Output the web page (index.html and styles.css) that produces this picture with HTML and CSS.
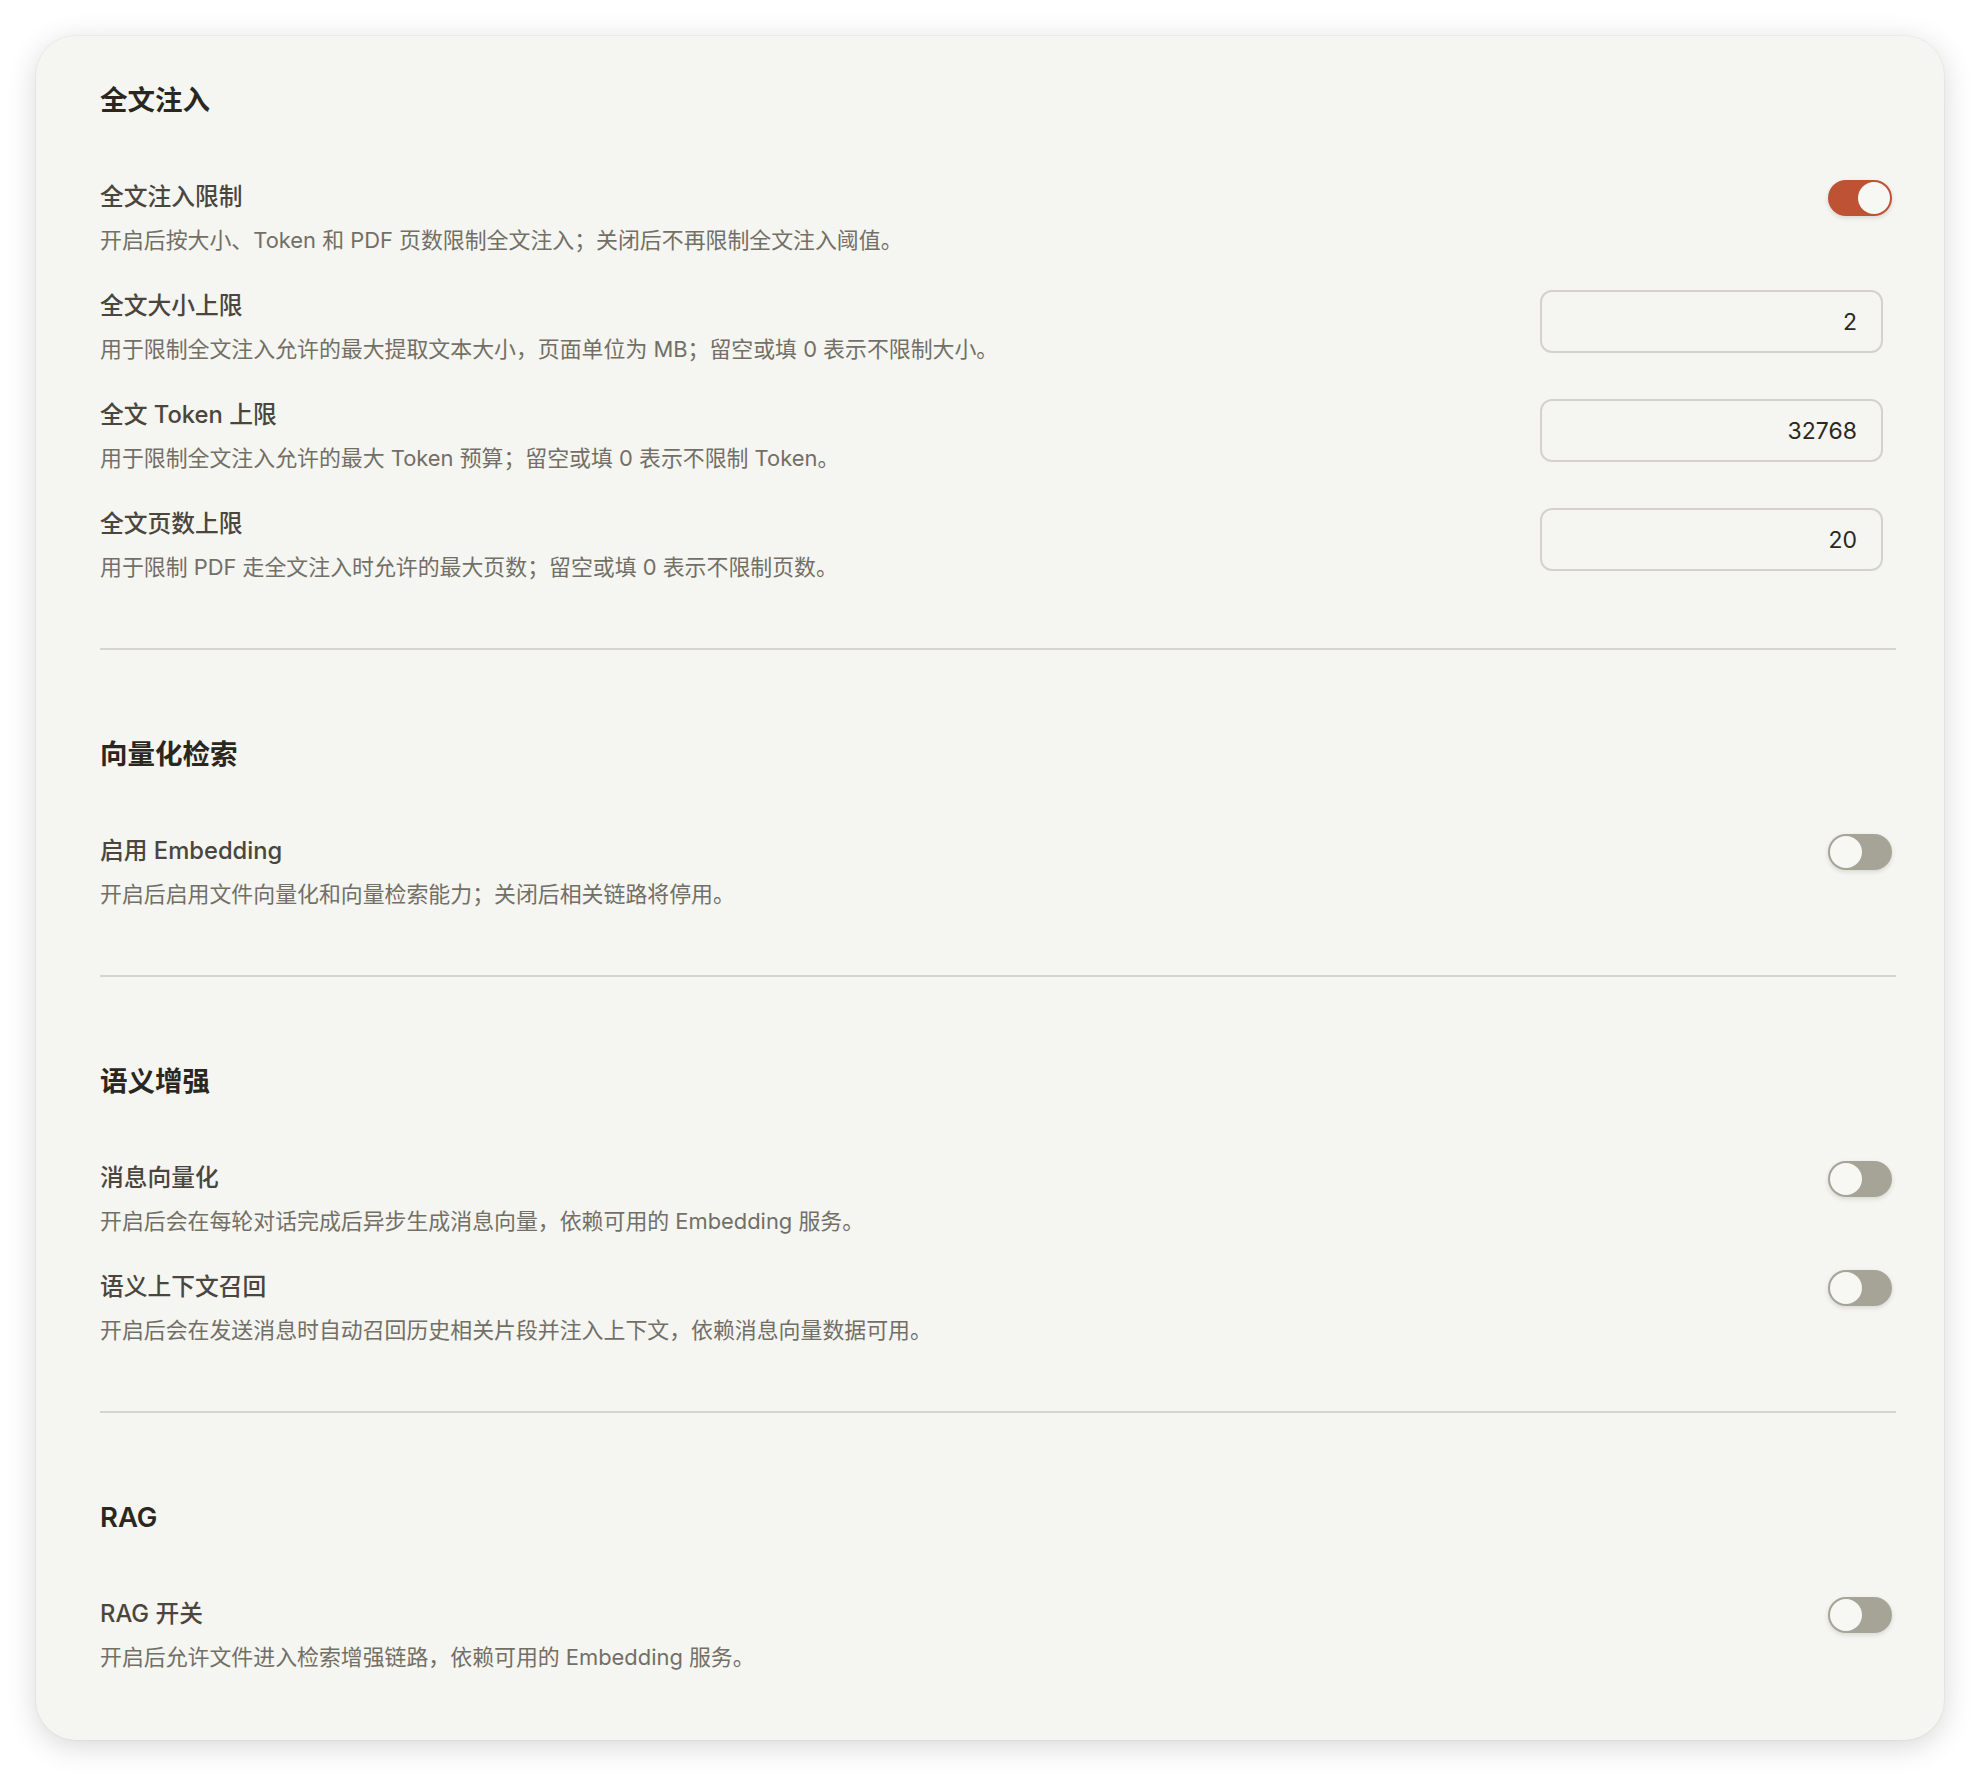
FILE: index.html
```html
<!DOCTYPE html>
<html lang="zh-CN">
<head>
  <meta charset="UTF-8">
  <title>检索设置</title>
  <link rel="stylesheet" href="styles.css">
</head>
<body>

  <div class="card">

    <section class="section">
      <h2>全文注入</h2>

      <div class="row">
        <div class="text">
          <div class="label">全文注入限制</div>
          <div class="desc">开启后按大小、Token 和 PDF 页数限制全文注入；关闭后不再限制全文注入阈值。</div>
        </div>
        <button class="switch on" aria-pressed="true"><span class="knob"></span></button>
      </div>

      <div class="row">
        <div class="text">
          <div class="label">全文大小上限</div>
          <div class="desc">用于限制全文注入允许的最大提取文本大小，页面单位为 MB；留空或填 0 表示不限制大小。</div>
        </div>
        <input class="num" type="text" value="2">
      </div>

      <div class="row">
        <div class="text">
          <div class="label">全文 Token 上限</div>
          <div class="desc">用于限制全文注入允许的最大 Token 预算；留空或填 0 表示不限制 Token。</div>
        </div>
        <input class="num" type="text" value="32768">
      </div>

      <div class="row">
        <div class="text">
          <div class="label">全文页数上限</div>
          <div class="desc">用于限制 PDF 走全文注入时允许的最大页数；留空或填 0 表示不限制页数。</div>
        </div>
        <input class="num" type="text" value="20">
      </div>
    </section>

    <section class="section">
      <h2>向量化检索</h2>

      <div class="row">
        <div class="text">
          <div class="label">启用 Embedding</div>
          <div class="desc">开启后启用文件向量化和向量检索能力；关闭后相关链路将停用。</div>
        </div>
        <button class="switch" aria-pressed="false"><span class="knob"></span></button>
      </div>
    </section>

    <section class="section">
      <h2>语义增强</h2>

      <div class="row">
        <div class="text">
          <div class="label">消息向量化</div>
          <div class="desc">开启后会在每轮对话完成后异步生成消息向量，依赖可用的 Embedding 服务。</div>
        </div>
        <button class="switch" aria-pressed="false"><span class="knob"></span></button>
      </div>

      <div class="row">
        <div class="text">
          <div class="label">语义上下文召回</div>
          <div class="desc">开启后会在发送消息时自动召回历史相关片段并注入上下文，依赖消息向量数据可用。</div>
        </div>
        <button class="switch" aria-pressed="false"><span class="knob"></span></button>
      </div>
    </section>

    <section class="section">
      <h2>RAG</h2>

      <div class="row">
        <div class="text">
          <div class="label">RAG 开关</div>
          <div class="desc">开启后允许文件进入检索增强链路，依赖可用的 Embedding 服务。</div>
        </div>
        <button class="switch" aria-pressed="false"><span class="knob"></span></button>
      </div>
    </section>

  </div>

</body>
</html>
```

FILE: styles.css
```css
body {
  margin: 0;
  padding: 36px;
  background: #fff;
  font-family: Inter, "Noto Sans CJK SC", sans-serif;
}

.card {
  background-color: #f5f5f1;
  border-radius: 40px;
  padding: 0 48px 0 64px;
  height: 1704px;
  box-sizing: border-box;
  box-shadow: 0 6px 30px rgba(0, 0, 0, 0.16), 0 0 0 1px rgba(0, 0, 0, 0.03);
}

.section {
  padding: 84px 0 65px;
  border-top: 2px solid #d6d4cc;
}

.section:first-child {
  padding-top: 44px;
  border-top: none;
}

.section:last-child {
  padding-bottom: 0;
}

h2 {
  margin: 0 0 60px;
  font-size: 27.5px;
  line-height: 40px;
  font-weight: 600;
  color: #2a2720;
}

.row {
  display: flex;
  align-items: flex-start;
  justify-content: space-between;
}

.row + .row {
  margin-top: 33px;
}

.label {
  font-size: 23.75px;
  line-height: 34px;
  font-weight: 500;
  color: #4a463e;
}

.desc {
  margin-top: 10px;
  font-size: 21.9px;
  line-height: 32px;
  color: #726f66;
}

/* toggle switch */
.switch {
  margin: 0 4px 0 0;
  padding: 2px;
  width: 64px;
  height: 36px;
  border: none;
  border-radius: 18px;
  background-color: #a6a497;
  box-shadow: 0 2px 5px rgba(0, 0, 0, 0.12);
  display: flex;
  cursor: pointer;
  flex-shrink: 0;
}

.switch.on {
  background-color: #bd5234;
  justify-content: flex-end;
}

.knob {
  width: 32px;
  height: 32px;
  border-radius: 50%;
  background-color: #f7f7f3;
}

/* number inputs */
.num {
  margin: 1px 13px 0 0;
  width: 343px;
  height: 63px;
  box-sizing: border-box;
  padding: 0 24px;
  border: 2px solid #d4d2ca;
  border-radius: 12px;
  background-color: #f5f5f1;
  text-align: right;
  font-family: Inter, "Noto Sans CJK SC", sans-serif;
  font-size: 23px;
  color: #2b2822;
  flex-shrink: 0;
}
```
